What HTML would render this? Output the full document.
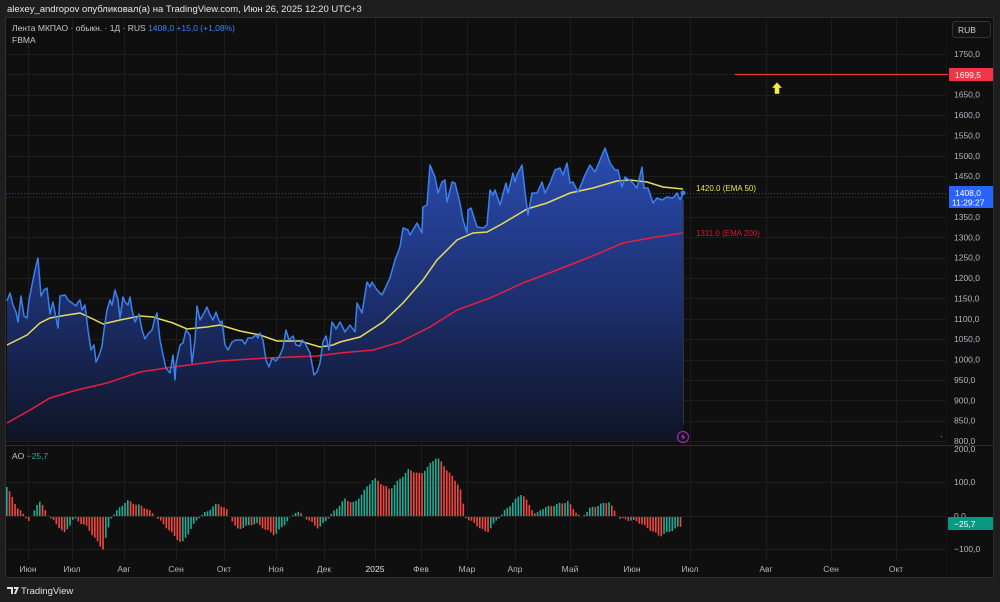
<!DOCTYPE html>
<html><head><meta charset="utf-8"><style>
html,body{margin:0;padding:0;background:#1e1e1e;width:1000px;height:602px;overflow:hidden}
svg{display:block}
text{font-family:"Liberation Sans","DejaVu Sans",sans-serif}
</style></head><body>
<svg id="s" width="1000" height="602" viewBox="0 0 1000 602" xmlns="http://www.w3.org/2000/svg">
<defs>
<linearGradient id="g" x1="0" y1="150" x2="0" y2="440" gradientUnits="userSpaceOnUse">
<stop offset="0" stop-color="#2a4bb0"/><stop offset="0.55" stop-color="#1c2e6a"/><stop offset="1" stop-color="#0f1425"/>
</linearGradient>
</defs>
<rect x="0" y="0" width="1000" height="602" fill="#1e1e1e"/>
<text x="7" y="12" font-size="9.5" fill="#e6e6e6">alexey_andropov опубликовал(а) на TradingView.com, Июн 26, 2025 12:20 UTC+3</text>
<rect x="5.5" y="17.5" width="988" height="560" fill="#0f0f0f" stroke="#2e2e2e"/>
<g id="grid" stroke="#1d1d1d" stroke-width="1"></g>
<line x1="6" y1="445.5" x2="993" y2="445.5" stroke="#2e2e2e"/>
<line x1="946.5" y1="18" x2="946.5" y2="577" stroke="#161616"/>
<path id="fill" fill="url(#g)"/>
<line x1="6" y1="193.5" x2="946" y2="193.5" stroke="#2a4a9a" stroke-dasharray="1,2"/>
<polyline id="ema200" fill="none" stroke="#e91e3f" stroke-width="1.5"/>
<polyline id="ema50" fill="none" stroke="#e6dc5c" stroke-width="1.5"/>
<polyline id="price" fill="none" stroke="#3a82f0" stroke-width="1.5" stroke-linejoin="round"/>
<circle cx="683" cy="193" r="2.5" fill="#3a82f0"/>
<line x1="683.5" y1="200" x2="683.5" y2="425" stroke="#333" />
<text x="696" y="191" font-size="8" fill="#f0e04a">1420.0 (EMA 50)</text>
<text x="696" y="236" font-size="8" fill="#d41c2e">1311.0 (EMA 200)</text>
<line x1="735" y1="74.5" x2="948" y2="74.5" stroke="#f23645" stroke-width="1.3"/>
<path d="M777 82 L782.5 88 L779.5 88 L779.5 94 L774.5 94 L774.5 88 L771.5 88 Z" fill="#ffeb3b" stroke="#222" stroke-width="0.6"/>
<circle cx="683" cy="437" r="5.5" fill="none" stroke="#9c27b0" stroke-width="1.2"/>
<path d="M684 433 L681 437.5 L683.5 437.5 L682 441 L685.5 436.5 L683 436.5 Z" fill="#b040c8"/>
<rect x="941" y="436" width="1" height="1" fill="#888"/>
<g id="ao"></g>
<line x1="6" y1="516.5" x2="946" y2="516.5" stroke="#222"/>
<g id="labels" font-size="8.5" fill="#b2b5be"></g>
<rect x="952.5" y="21.5" width="38" height="16" rx="3" fill="#121212" stroke="#333"/>
<text x="958" y="33" font-size="8.5" fill="#d1d4dc">RUB</text>
<rect x="949" y="68" width="44" height="13" fill="#f23645"/>
<text x="955" y="78" font-size="8.5" fill="#fff">1699,5</text>
<rect x="949" y="186" width="44" height="22" fill="#2962ff"/>
<text x="955" y="196" font-size="8.5" fill="#fff">1408,0</text>
<text x="952" y="205.5" font-size="8.5" fill="#fff">11:29:27</text>
<rect x="948" y="517" width="45" height="13" fill="#089981"/>
<text x="954" y="527" font-size="8.5" fill="#fff">−25,7</text>
<text x="12" y="31" font-size="8.5" fill="#c8c8c8">Лента МКПАО · обыкн. · 1Д · RUS <tspan fill="#3b82f6">1408,0  +15,0 (+1,08%)</tspan></text>
<text x="12" y="43" font-size="8.5" fill="#c8c8c8">FBMA</text>
<text x="12" y="459" font-size="8.5" fill="#c8c8c8">AO <tspan fill="#22ab94">−25,7</tspan></text>
<path d="M7 587 H13 V594 H11 V589 H7 Z M14 587 H19 L16 594 H14 L16 589 H14 Z" fill="#e0e0e0"/>
<text x="21" y="594" font-size="9.5" fill="#e0e0e0">TradingView</text>
</svg>
<script>
const NS="http://www.w3.org/2000/svg";
function el(t,a,p){const e=document.createElementNS(NS,t);for(const k in a)e.setAttribute(k,a[k]);document.getElementById(p).appendChild(e);return e;}
const py=p=>441-(p-800)*0.4074;
for(let p=800;p<=1750;p+=50){const y=Math.round(py(p))+.5;el('line',{x1:6,x2:946,y1:y,y2:y},'grid');
 el('text',{x:954,y:py(p)+3},'labels').textContent=p+',0';}
[482,549].forEach(y=>el('line',{x1:6,x2:946,y1:y+.5,y2:y+.5},'grid'));
const months=[["Июн",28],["Июл",72],["Авг",124],["Сен",176],["Окт",224],["Ноя",276],["Дек",324],["2025",375],["Фев",421],["Мар",467],["Апр",515],["Май",570],["Июн",632],["Июл",690],["Авг",766],["Сен",831],["Окт",896]];
months.forEach(([m,x])=>{el('line',{x1:x+.5,x2:x+.5,y1:18,y2:560},'grid');
 const t=el('text',{x:x,y:572,'text-anchor':'middle'},'labels');t.textContent=m;if(m==="2025")t.setAttribute('fill','#e0e0e0');});
[["200,0",449],["100,0",482],["0,0",516],["−100,0",549]].forEach(([s,y])=>{el('text',{x:954,y:y+3},'labels').textContent=s;});
const P="7,301 10,293 13,305 16,312 18,322 21,296 24,316 27,318 29,300 32,285 35,270 38,258 41,296 44,290 47,288 50,314 53,302 56,318 58,328 60,296 65,295 68,300 72,303 76,306 78,302 80,300 82,310 85,305 88,330 91,350 94,345 96,362 98,358 100,353 102,346 104,330 107,310 110,300 112,305 115,290 118,300 120,318 123,297 125,302 128,305 130,297 132,310 135,322 139,314 142,330 145,339 148,334 152,330 155,318 157,313 160,340 163,355 166,368 170,373 173,355 175,380 176,364 180,345 183,343 186,330 190,335 192,363 195,340 197,306 200,320 204,313 207,307 210,315 213,320 216,312 218,318 220,323 222,321 225,345 228,350 232,342 236,340 242,340 245,344 248,338 252,338 256,335 258,338 260,333 263,340 266,360 269,367 272,358 276,361 280,355 283,348 286,330 289,340 293,336 296,345 300,346 302,340 305,343 310,353 314,375 317,372 320,363 323,342 326,336 329,350 332,322 336,329 340,322 345,332 350,325 355,332 357,303 362,313 367,282 370,287 372,282 377,290 382,295 390,278 395,260 400,247 403,228 408,230 410,235 417,223 422,233 423,207 427,205 430,165 435,177 438,193 442,182 445,180 447,202 452,182 455,183 460,203 463,220 467,233 468,210 471,208 477,227 483,228 487,225 490,190 493,195 495,190 500,205 506,183 508,193 513,173 515,182 517,175 522,165 525,192 528,215 532,193 537,193 542,182 545,193 550,183 555,170 560,168 563,175 567,163 570,183 573,182 578,192 585,175 590,165 595,172 600,160 605,148 610,163 615,170 618,170 622,187 625,177 632,182 637,188 642,167 644,188 648,188 653,203 657,198 662,200 667,197 673,198 677,193 680,200 683,193";
document.getElementById('price').setAttribute('points',P);
document.getElementById('fill').setAttribute('d','M7,441 L'+P.replace(/ /g,' L')+' L683,441 Z');
document.getElementById('ema50').setAttribute('points',"7,345 27,335 40,323 50,318 67,315 80,313 93,319 103,324 120,320 140,316 153,317 173,323 187,329 207,327 220,325 240,331 260,335 277,341 300,341 320,347 333,345 340,342 360,337 383,322 403,303 423,280 437,260 457,240 473,233 487,232 500,225 517,215 527,209 547,203 570,193 593,188 617,181 630,180 647,182 663,187 683,189");
document.getElementById('ema200').setAttribute('points',"7,423 30,410 50,398 77,390 107,383 140,372 173,367 220,361 267,358 317,356 340,353 373,350 400,342 430,327 457,310 490,298 523,283 557,270 590,257 623,243 650,238 683,233");
const K=[[6,90],[16,28],[29,-17],[38,49],[48,0],[64,-53],[73,-7],[86,-33],[102,-102],[111,0],[126,47],[146,23],[156,-4],[181,-84],[197,-7],[217,39],[226,18],[236,-41],[255,-22],[274,-58],[296,16],[318,-38],[344,51],[354,39],[373,115],[389,80],[408,141],[420,126],[436,180],[459,90],[465,-4],[486,-51],[503,13],[521,69],[535,3],[541,23],[567,44],[580,-6],[589,23],[608,44],[618,-7],[637,-17],[659,-61],[682,-28]];
function f(x){for(let i=0;i<K.length-1;i++){if(x<=K[i+1][0]){const t=(x-K[i][0])/(K[i+1][0]-K[i][0]);return K[i][1]+t*(K[i+1][1]-K[i][1]);}}return K[K.length-1][1];}
let prev=null;
for(let x=6;x<=682;x+=2.75){let v=f(x)+Math.sin(x*1.7)*3;const c=(prev===null||v>=prev)?'#22ab94':'#f4463f';prev=v;
 const y0=516,y1=516-v*0.33;el('rect',{x:x.toFixed(2),y:Math.min(y0,y1),width:1.6,height:Math.max(0.6,Math.abs(y1-y0)),fill:c},'ao');}
</script>
</body></html>
